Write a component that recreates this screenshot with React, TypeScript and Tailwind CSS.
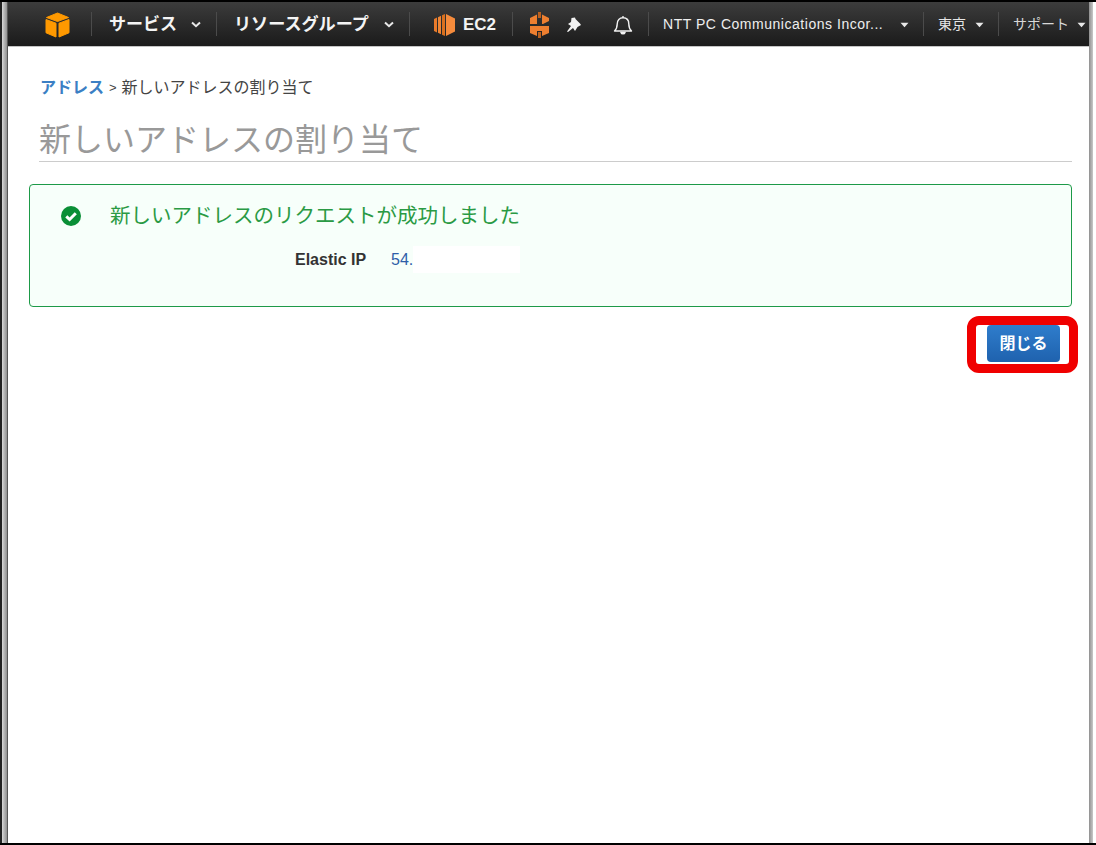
import React from "react";

const FONT = "[font-family:'Liberation_Sans','Noto_Sans_CJK_JP',sans-serif]";

function Chevron() {
  return (
    <svg width="10" height="7" viewBox="0 0 10 7" fill="none" stroke="#e8e8e8" strokeWidth="2">
      <path d="M1 1.5 L5 5.2 L9 1.5" />
    </svg>
  );
}

function Caret() {
  return (
    <svg width="9" height="6" viewBox="0 0 9 6" fill="#e8e8e8">
      <path d="M0.5 0.8 H8.5 L4.5 5.2 Z" />
    </svg>
  );
}

function Cube() {
  return (
    <svg width="25" height="26" viewBox="0 0 25 26">
      <path d="M12.5 1 L23.5 5.5 L12.5 9.5 L1.5 5.5 Z" fill="#f90" stroke="#f90" strokeLinejoin="round" />
      <path d="M1 7.5 L11 11.2 V25 L1 20.8 Z" fill="#f90" stroke="#f90" strokeLinejoin="round" />
      <path d="M24 7.5 L14 11.2 V25 L24 20.8 Z" fill="#f90" stroke="#f90" strokeLinejoin="round" />
    </svg>
  );
}

function Ec2Icon() {
  return (
    <svg width="21" height="22" viewBox="0 0 21 22">
      <path d="M0 5 L3 3.6 V18.4 L0 17 Z" fill="#e87a2a" />
      <path d="M4 3.2 L7 1.8 V20.2 L4 18.8 Z" fill="#ee8535" />
      <path d="M8 1.3 L11 0 V22 L8 20.7 Z" fill="#d9701f" />
      <path d="M12 0 L21 4.5 V17.5 L12 22 Z" fill="#f58b3c" />
    </svg>
  );
}

function WafIcon() {
  return (
    <svg width="19" height="26" viewBox="0 0 19 26">
      <path d="M0 6 L7 2.5 V12 H0 Z" fill="#ee7f30" />
      <path d="M8 0 L11 0 V6 L8 6 Z" fill="#b95f1f" />
      <path d="M12 2.5 L19 6 V9 L13 12 H12 Z" fill="#ee7f30" />
      <path d="M0 14 H19 V21 L12 24 V19 H7 V24 L0 21 Z" fill="#ee7f30" />
      <path d="M8 20 H11 V26 H8 Z" fill="#b95f1f" />
    </svg>
  );
}

function Pin() {
  return (
    <svg width="16" height="16" viewBox="0 0 16 16" fill="#f2f2f2">
      <path d="M5.5 1 L9 0.5 L9.5 2 L14 6.5 L15 8 L11.5 10 L9 14 L7 11 L2 15 L1 14.5 L5 9 L2 7 L5 5 Z" />
    </svg>
  );
}

function Bell() {
  return (
    <svg width="20" height="20" viewBox="0 0 20 20" fill="none" stroke="#f2f2f2" strokeWidth="1.4">
      <path d="M1.5 16 C3.5 14 4.2 12.5 4.2 9 C4.2 5 6.5 2.8 10 2.8 C13.5 2.8 15.8 5 15.8 9 C15.8 12.5 16.5 14 18.5 16 Z" strokeLinejoin="round" />
      <path d="M10 2.5 V1" />
      <path d="M8 17.5 C8.5 19.3 11.5 19.3 12 17.5 Z" fill="#f2f2f2" />
    </svg>
  );
}

function Check() {
  return (
    <svg width="20" height="20" viewBox="0 0 20 20">
      <circle cx="10" cy="10" r="10" fill="#0a8f36" />
      <path d="M5.3 10.3 L8.6 13.5 L14.8 7.2" fill="none" stroke="#fff" strokeWidth="3" />
    </svg>
  );
}

function Cell({ w, first, children }: { w: string; first?: boolean; children: React.ReactNode }) {
  return (
    <div className={`relative flex h-full shrink-0 items-center pt-[1px] ${w}`}>
      {!first && <span className="absolute left-0 top-[10px] h-[24px] w-px bg-[#4b4b4b]" />}
      {children}
    </div>
  );
}

export default function App() {
  return (
    <div className={`flex h-[845px] w-[1096px] flex-col overflow-hidden border-y-2 border-black bg-white ${FONT}`}>
      <div className="flex min-h-0 flex-1">
        <div className="w-[2px] shrink-0 bg-[#222]" />
        <div className="w-[5px] shrink-0 bg-gradient-to-r from-[#d8d8d8] to-[#8f8f8f]" />
        <div className="w-px shrink-0 bg-[#555]" />

        <main className="relative flex w-[1081px] shrink-0 flex-col">
          <nav className="flex h-[45px] shrink-0 items-center overflow-hidden border-b border-[#c4c4c4] bg-gradient-to-b from-[#3c3c3c] to-[#1b1b1b] text-white">
            <Cell w="w-[83px]" first>
              <span className="ml-[37px] flex"><Cube /></span>
            </Cell>
            <Cell w="w-[125px]">
              <span className="ml-[18px] text-[17px] font-bold text-[#f4f4f4]">サービス</span>
              <span className="ml-[14px] flex"><Chevron /></span>
            </Cell>
            <Cell w="w-[193px]">
              <span className="ml-[18px] text-[17.1px] font-bold whitespace-nowrap text-[#f4f4f4]">リソースグループ</span>
              <span className="ml-[15px] flex"><Chevron /></span>
            </Cell>
            <Cell w="w-[103px]">
              <span className="ml-[25px] flex"><Ec2Icon /></span>
              <span className="ml-[8px] text-[17px] font-bold text-[#f4f4f4]">EC2</span>
            </Cell>
            <Cell w="w-[136px]">
              <span className="ml-[18px] flex"><WafIcon /></span>
              <span className="ml-[17px] flex"><Pin /></span>
              <span className="ml-[31px] flex"><Bell /></span>
            </Cell>
            <Cell w="w-[275px]">
              <span className="ml-[15px] w-[222px] text-[14px] tracking-[0.53px] whitespace-nowrap text-[#eeeeee]">NTT PC Communications Incor...</span>
              <span className="ml-[15px] flex"><Caret /></span>
            </Cell>
            <Cell w="w-[75px]">
              <span className="ml-[15px] text-[14px] text-[#e6e6e6]">東京</span>
              <span className="ml-[9px] flex"><Caret /></span>
            </Cell>
            <Cell w="w-[91px]">
              <span className="ml-[15px] text-[14px] text-[#d8d8d8]">サポート</span>
              <span className="ml-[8px] flex"><Caret /></span>
            </Cell>
          </nav>

          <div className="ml-[33px] mt-[29px] flex items-center whitespace-nowrap text-[16px] leading-[24px]">
            <span className="-ml-[1px] font-bold text-[#3b7fc4]">アドレス</span>
            <span className="ml-[5px] text-[13px] text-[#444]">&gt;</span>
            <span className="ml-[5px] text-[#444]">新しいアドレスの割り当て</span>
          </div>

          <div className="ml-[31px] mr-[17px] mt-[19px] border-b border-[#cccccc] text-[32px] leading-[42px] text-[#999999]">
            新しいアドレスの割り当て
          </div>

          <section className="ml-[21px] mr-[17px] mt-[22px] h-[123px] shrink-0 rounded-[4px] border border-[#1d9a48] bg-[#f7fffa]">
            <div className="ml-[31px] mt-[19px] flex items-center">
              <span className="flex"><Check /></span>
              <span className="ml-[29px] text-[20.5px] leading-[24px] whitespace-nowrap text-[#2a9a44]">
                新しいアドレスのリクエストが成功しました
              </span>
            </div>
            <div className="mt-[18px] flex items-center">
              <span className="ml-[265px] w-[96px] text-[16px] font-bold text-[#333]">Elastic IP</span>
              <span className="w-[22px] text-[16px] text-[#2e5ea8]">54.</span>
              <span className="h-[27px] w-[107px] bg-white" />
            </div>
          </section>

          <div className="mr-[29px] mt-[18px] flex justify-end">
            <div className="relative">
              <button className="flex h-[37px] w-[73px] items-center justify-center rounded-[4px] bg-gradient-to-b from-[#2f7dcc] to-[#1f62ae] text-[16px] font-bold text-white">
                閉じる
              </button>
              <span className="absolute -bottom-[11px] -left-[20px] -right-[18px] -top-[9px] rounded-[12px] border-[9px] border-[#f00000]" />
            </div>
          </div>
        </main>

        <div className="w-[4px] shrink-0 bg-gradient-to-r from-[#8f8f8f] to-[#c8c8c8]" />
        <div className="w-[3px] shrink-0 bg-white" />
      </div>
    </div>
  );
}
